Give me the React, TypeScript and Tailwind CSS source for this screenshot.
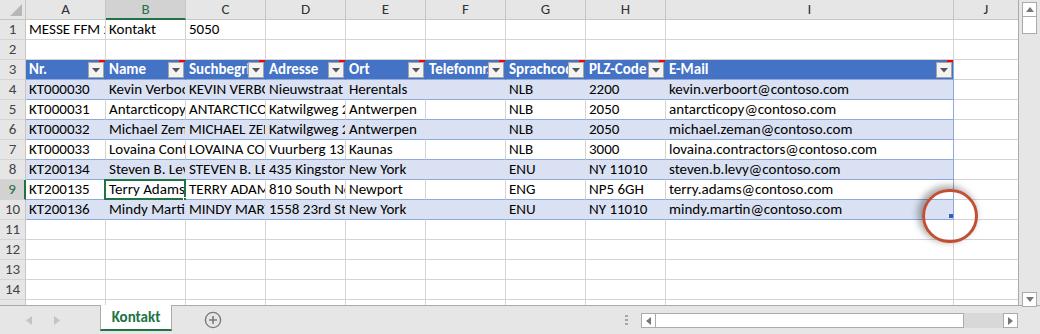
import React from 'react';

const W = ['w-[80px]', 'w-[80px]', 'w-[80px]', 'w-[80px]', 'w-[80px]', 'w-[80px]', 'w-[80px]', 'w-[80px]', 'w-[288px]', 'w-[65px]'];
const LETTERS = ['A', 'B', 'C', 'D', 'E', 'F', 'G', 'H', 'I', 'J'];
const HEADERS = ['Nr.', 'Name', 'Suchbegriff', 'Adresse', 'Ort', 'Telefonnr.', 'Sprachcode', 'PLZ-Code', 'E-Mail'];
const DATA: string[][] = [
  ['KT000030', 'Kevin Verboort', 'KEVIN VERBOORT', 'Nieuwstraat 13', 'Herentals', '', 'NLB', '2200', 'kevin.verboort@contoso.com'],
  ['KT000031', 'Antarcticopy', 'ANTARCTICOPY', 'Katwilgweg 23', 'Antwerpen', '', 'NLB', '2050', 'antarcticopy@contoso.com'],
  ['KT000032', 'Michael Zeman', 'MICHAEL ZEMAN', 'Katwilgweg 23', 'Antwerpen', '', 'NLB', '2050', 'michael.zeman@contoso.com'],
  ['KT000033', 'Lovaina Contractors', 'LOVAINA CONTRACTORS', 'Vuurberg 137', 'Kaunas', '', 'NLB', '3000', 'lovaina.contractors@contoso.com'],
  ['KT200134', 'Steven B. Levy', 'STEVEN B. LEVY', '435 Kingston Rd', 'New York', '', 'ENU', 'NY 11010', 'steven.b.levy@contoso.com'],
  ['KT200135', 'Terry Adams', 'TERRY ADAMS', '810 South New St', 'Newport', '', 'ENG', 'NP5 6GH', 'terry.adams@contoso.com'],
  ['KT200136', 'Mindy Martin', 'MINDY MARTIN', '1558 23rd Street', 'New York', '', 'ENU', 'NY 11010', 'mindy.martin@contoso.com'],
];

function RowHeader({ n, selected }: { n: number; selected?: boolean }) {
  return (
    <div
      className={
        'w-[26px] shrink-0 h-full border-b border-[#d4d4d4] flex items-center justify-center text-[15px] leading-none ' +
        (selected
          ? 'bg-[#d2d2d2] text-[#217346] border-r-2 border-r-[#217346]'
          : 'bg-[#e6e6e6] text-[#444444] border-r border-r-[#c6c6c6]')
      }
    >
      {n}
    </div>
  );
}

function FilterBtn() {
  return (
    <div className="absolute right-[1px] top-[2px] w-[16px] h-[16px] bg-[#f3f3f3] border border-[#a6a6a6] flex items-center justify-center">
      <svg width="8" height="5" viewBox="0 0 8 5">
        <path d="M0 0 L8 0 L4 4.5 Z" fill="#555" />
      </svg>
    </div>
  );
}

function PlainRow({ n, cells }: { n: number; cells?: string[] }) {
  return (
    <div className="flex h-[20px] shrink-0">
      <RowHeader n={n} />
      {W.map((w, i) => (
        <div
          key={i}
          className={w + ' shrink-0 h-full border-r border-b border-[#d4d4d4] overflow-hidden whitespace-nowrap px-[3px] text-[15px] leading-[19px] text-black'}
        >
          {cells ? cells[i] : ''}
        </div>
      ))}
    </div>
  );
}

function HeaderTableRow() {
  return (
    <div className="flex h-[20px] shrink-0">
      <RowHeader n={3} />
      {W.slice(0, 9).map((w, i) => (
        <div
          key={i}
          className={
            w +
            ' shrink-0 h-full relative bg-[#4472c4] border-b border-[#8ea9db] overflow-hidden whitespace-nowrap pl-[3px] pr-[19px] text-[15px] leading-[19px] font-bold text-white ' +
            (i === 8 ? 'border-r border-r-[#8ea9db]' : 'border-r border-r-[#4472c4]')
          }
        >
          {HEADERS[i]}
          <div className="absolute right-0 top-0 w-[6px] h-[2px] bg-[#ff0000]" />
          <FilterBtn />
        </div>
      ))}
      <div className="w-[65px] shrink-0 h-full border-r border-b border-[#d4d4d4]" />
    </div>
  );
}

function DataRow({ n, cells, band, sel, last }: { n: number; cells: string[]; band: boolean; sel?: boolean; last?: boolean }) {
  return (
    <div className="flex h-[20px] shrink-0">
      <RowHeader n={n} selected={sel} />
      {W.slice(0, 9).map((w, i) => (
        <div
          key={i}
          className={
            w +
            ' shrink-0 h-full relative border-b border-b-[#8ea9db] whitespace-nowrap text-[15px] leading-[19px] text-black ' +
            (band ? 'bg-[#d9e1f2] ' : 'bg-white ') +
            (i === 8
              ? 'border-r border-r-[#8ea9db]'
              : band
              ? 'border-r border-r-[#d9e1f2]'
              : 'border-r border-r-[#d4d4d4]')
          }
        >
          <div className="overflow-hidden h-full px-[3px]">{cells[i]}</div>
          {sel && i === 1 && (
            <>
              <div className="absolute left-[-2px] top-[-1px] right-[-1px] bottom-[-1px] border-2 border-[#217346]" />
              <div className="absolute right-[-4px] bottom-[-4px] w-[6px] h-[6px] bg-[#217346] border border-white" />
            </>
          )}
          {last && i === 8 && <div className="absolute right-[0px] bottom-[1px] w-[4px] h-[4px] bg-[#3b5bbf]" />}
        </div>
      ))}
      <div className="w-[65px] shrink-0 h-full border-r border-b border-[#d4d4d4]" />
    </div>
  );
}

export default function App() {
  return (
    <div className="w-[1040px] h-[334px] overflow-hidden bg-white relative font-['Carlito','Lato','Liberation_Sans',sans-serif] select-none">
      <div className="flex h-[305px]">
        {/* grid */}
        <div className="w-[1019px] h-full overflow-hidden flex flex-col border-r border-[#ababab]">
          {/* column headers */}
          <div className="flex h-[20px] shrink-0">
            <div className="w-[26px] shrink-0 h-full bg-[#e6e6e6] border-r border-b border-[#c6c6c6] relative">
              <svg className="absolute right-[3px] bottom-[3px]" width="12" height="12" viewBox="0 0 12 12">
                <path d="M12 0 L12 12 L0 12 Z" fill="#b7b7b7" />
              </svg>
            </div>
            {W.map((w, i) => (
              <div
                key={i}
                className={
                  w +
                  ' shrink-0 h-full flex items-center justify-center text-[15px] leading-none border-r border-r-[#c6c6c6] ' +
                  (i === 1
                    ? 'bg-[#d2d2d2] text-[#217346] border-b-2 border-b-[#217346]'
                    : 'bg-[#e6e6e6] text-[#333333] border-b border-b-[#c6c6c6]')
                }
              >
                {LETTERS[i]}
              </div>
            ))}
          </div>
          <PlainRow n={1} cells={['MESSE FFM 2019', 'Kontakt', '5050', '', '', '', '', '', '', '']} />
          <PlainRow n={2} />
          <HeaderTableRow />
          {DATA.map((r, i) => (
            <DataRow key={i} n={4 + i} cells={r} band={i % 2 === 0} sel={i === 5} last={i === 6} />
          ))}
          <PlainRow n={11} />
          <PlainRow n={12} />
          <PlainRow n={13} />
          <PlainRow n={14} />
          <PlainRow n={15} />
        </div>
        {/* vertical scrollbar */}
        <div className="w-[21px] h-full bg-[#e6e6e6] flex flex-col pl-[3px] pt-[2px]">
          <div className="w-[15px] h-[15px] bg-white border border-[#ababab] flex items-center justify-center">
            <svg width="8" height="5" viewBox="0 0 8 5">
              <path d="M4 0 L8 5 L0 5 Z" fill="#777" />
            </svg>
          </div>
          <div className="w-[15px] h-[17px] bg-white border border-[#ababab] border-t-0" />
          <div className="flex-1" />
          <div className="w-[15px] h-[15px] bg-white border border-[#ababab] flex items-center justify-center mb-[-2px]">
            <svg width="8" height="5" viewBox="0 0 8 5">
              <path d="M0 0 L8 0 L4 5 Z" fill="#777" />
            </svg>
          </div>
        </div>
      </div>

      {/* tab bar */}
      <div className="h-[29px] bg-[#e6e6e6] border-t border-[#ababab] flex items-start">
        <div className="w-[100px] h-full flex items-center pl-[26px] gap-[22px]">
          <svg width="6" height="9" viewBox="0 0 6 9">
            <path d="M6 0 L6 9 L0 4.5 Z" fill="#c4c4c4" />
          </svg>
          <svg width="6" height="9" viewBox="0 0 6 9">
            <path d="M0 0 L0 9 L6 4.5 Z" fill="#c4c4c4" />
          </svg>
        </div>
        <div className="w-[72px] h-[26px] -mt-[1px] bg-white border-l border-r border-[#ababab] border-b-2 border-b-[#217346] flex items-center justify-center text-[15px] font-bold text-[#217346]">
          Kontakt
        </div>
        <div className="w-[82px] h-full flex items-center justify-center pb-[1px]">
          <svg width="18" height="18" viewBox="0 0 18 18">
            <circle cx="9" cy="9" r="7.6" fill="none" stroke="#7a7a7a" strokeWidth="1.4" />
            <path d="M9 5 V13 M5 9 H13" stroke="#7a7a7a" strokeWidth="1.6" />
          </svg>
        </div>
        <div className="flex-1" />
        <div className="h-full flex items-center mr-[13px]">
          <div className="flex flex-col gap-[2px]">
            <div className="w-[3px] h-[2px] bg-[#a6a6a6]" />
            <div className="w-[3px] h-[2px] bg-[#a6a6a6]" />
            <div className="w-[3px] h-[2px] bg-[#a6a6a6]" />
          </div>
        </div>
        <div className="mt-[7px] flex h-[15px]">
          <div className="w-[15px] h-[15px] bg-white border border-[#ababab] flex items-center justify-center">
            <svg width="5" height="8" viewBox="0 0 5 8">
              <path d="M5 0 L5 8 L0 4 Z" fill="#777" />
            </svg>
          </div>
          <div className="w-[347px] h-[15px] bg-[#d8d8d8] flex">
            <div className="w-[308px] h-full bg-white border border-[#ababab] border-l-0" />
          </div>
          <div className="w-[15px] h-[15px] bg-white border border-[#ababab] flex items-center justify-center">
            <svg width="5" height="8" viewBox="0 0 5 8">
              <path d="M0 0 L0 8 L5 4 Z" fill="#777" />
            </svg>
          </div>
        </div>
        <div className="w-[22px]" />
      </div>

      {/* annotation circle */}
      <div className="absolute left-[922px] top-[189px] w-[56px] h-[54px] rounded-full border-[3px] border-[#c24f32] shadow-[-3px_-2px_7px_1px_rgba(0,0,0,0.35)]" />
    </div>
  );
}
